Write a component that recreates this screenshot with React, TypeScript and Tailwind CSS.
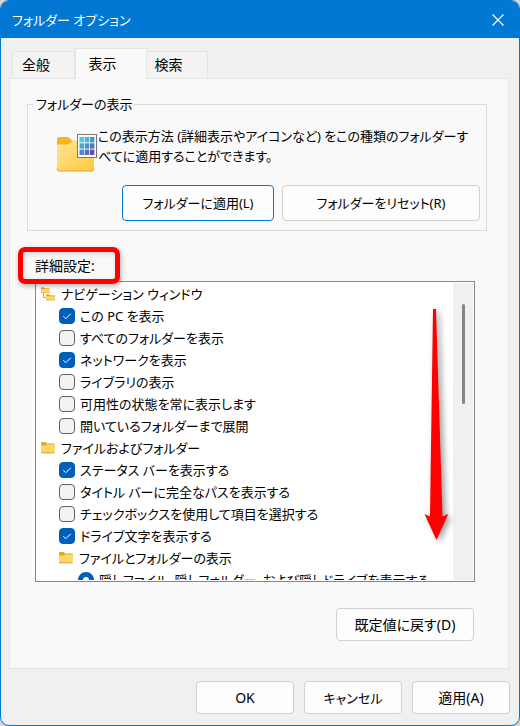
import * as React from 'react'
import { useState } from 'react'

interface TreeRow {
  id: string;
  label: string;
  level: number;
  kind: 'tree' | 'folder' | 'check' | 'radio';
  checked?: boolean;
}

const rows: TreeRow[] = [
  { id: 'nav', label: 'ナビゲーション ウィンドウ', level: 0, kind: 'tree' },
  { id: 'pc', label: 'この PC を表示', level: 1, kind: 'check', checked: true },
  { id: 'all', label: 'すべてのフォルダーを表示', level: 1, kind: 'check' },
  { id: 'net', label: 'ネットワークを表示', level: 1, kind: 'check', checked: true },
  { id: 'lib', label: 'ライブラリの表示', level: 1, kind: 'check' },
  { id: 'avail', label: '可用性の状態を常に表示します', level: 1, kind: 'check' },
  { id: 'expand', label: '開いているフォルダーまで展開', level: 1, kind: 'check' },
  { id: 'files', label: 'ファイルおよびフォルダー', level: 0, kind: 'folder' },
  { id: 'status', label: 'ステータス バーを表示する', level: 1, kind: 'check', checked: true },
  { id: 'path', label: 'タイトル バーに完全なパスを表示する', level: 1, kind: 'check' },
  { id: 'boxes', label: 'チェックボックスを使用して項目を選択する', level: 1, kind: 'check' },
  { id: 'drive', label: 'ドライブ文字を表示する', level: 1, kind: 'check', checked: true },
  { id: 'hidden', label: 'ファイルとフォルダーの表示', level: 1, kind: 'folder' },
  { id: 'show', label: '隠しファイル、隠しフォルダー、および隠しドライブを表示する', level: 2, kind: 'radio', checked: true },
];

const indents = ['pl-1', 'pl-[22px]', 'pl-[41px]'];

function SmallFolder() {
  return (
    <svg width="16" height="16" viewBox="1 0 16 16" className="shrink-0">
      <path d="M1 2.700q0-.7.7-.7h3.900l1.600 1.600H14q.7 0 .7.7V8H1z" fill="#e9a820" />
      <path d="M1 5.600h4.800l1.500-1.200H14q.8 0 .8.8v7.200q0 .8-.8.8H1.800q-.8 0-.8-.8z" fill="#ffd766" />
      <path d="M1 12.300h13.800q0 1-.8 1H1.800q-.8 0-.8-1z" fill="#d9a540" />
    </svg>
  );
}

function TreeIcon() {
  return (
    <svg width="16" height="16" viewBox="1 0 16 16" className="shrink-0">
      <path d="M3.500 6v5.500H7" fill="none" stroke="#a8a8a8" />
      <path d="M1 1.400h3l1 1h4.700v4.600H1z" fill="#ffd766" />
      <path d="M1 1.400h3l1 1h4.700v.6H1z" fill="#e0a01c" />
      <path d="M1 6.700h8.700" stroke="#dca63c" strokeWidth=".6" />
      <path d="M6 8.600h3l1 1h5v4.600H6z" fill="#ffd766" />
      <path d="M6 8.600h3l1 1h5v.6H6z" fill="#e0a01c" />
      <path d="M6 14h9" stroke="#dca63c" strokeWidth=".6" />
    </svg>
  );
}

function FolderWithGrid() {
  const tiles = [
    ['#49cbe0', '#48b5d8', '#409bd0'],
    ['#4aa9d0', '#4b90c8', '#5278be'],
    ['#5187c4', '#5d6cb8', '#6b4ba8'],
  ];
  return (
    <svg width="42" height="40" viewBox="0 0 42 40" className="shrink-0">
      <defs>
        <linearGradient id="folder" x1="0" y1="0" x2="1" y2="1">
          <stop offset="0" stopColor="#ffe59b" />
          <stop offset="1" stopColor="#ffc938" />
        </linearGradient>
      </defs>
      <path d="M1 5q0-2 2-2h8.500q1 0 1.700.7l3 3H20v6H1z" fill="#fbb514" />
      <path d="M1 11.500q0-1 1-1h9.500q1 0 1.800-.7l2.400-2.200q.7-.6 1.600-.6H36q2 0 2 2v26q0 2-2 2H3q-2 0-2-2z" fill="url(#folder)" />
      <path d="M1 34.500q0 2.500 2 2.500h33q2 0 2-2.500" fill="none" stroke="#d8a338" />
      <rect x="21.500" y=".5" width="19" height="23" fill="#fff" stroke="#767676" />
      {tiles.map((line, y) =>
        line.map((color, x) => (
          <rect key={color} x={23.5 + x * 5.2} y={3 + y * 6.3} width="4.500" height="5.400" fill={color} />
        ))
      )}
    </svg>
  );
}

function OptionRow({ row }: { row: TreeRow }) {
  const [checked, setChecked] = useState(!!row.checked);

  if (row.kind === 'tree' || row.kind === 'folder') {
    return (
      <li className={`flex h-[22px] items-center gap-1 ${indents[row.level]}`}>
        {row.kind === 'tree' ? <TreeIcon /> : <SmallFolder />}
        <span>{row.label}</span>
      </li>
    );
  }

  return (
    <li className={indents[row.level]}>
      <label className="flex h-[22px] items-center gap-[5px]">
        <span className="grid size-4 shrink-0 place-items-center">
          {row.kind === 'check' ? (
            <input
              type="checkbox"
              checked={checked}
              onChange={() => setChecked(!checked)}
              className="col-start-1 row-start-1 size-4 appearance-none rounded-[4px] border border-[#5f5f5f] bg-[#f3f3f3] checked:border-[#005fb8] checked:bg-[#005fb8]"
            />
          ) : (
            <input
              type="radio"
              name="hidden-files"
              defaultChecked
              className="col-start-1 row-start-1 size-4 appearance-none rounded-full border-[5px] border-[#005fb8] bg-white"
            />
          )}
          {row.kind === 'check' && checked && (
            <svg viewBox="0 0 16 16" className="pointer-events-none col-start-1 row-start-1 size-4">
              <path d="M4.300 8.200l2.500 2.500 5-5" fill="none" stroke="#fff" />
            </svg>
          )}
        </span>
        <span>{row.label}</span>
      </label>
    </li>
  );
}

function DialogButton({ children, className }: { children: React.ReactNode; className: string }) {
  return (
    <button type="button" className={`rounded-[4px] border bg-[#fdfdfd] text-center ${className}`}>
      {children}
    </button>
  );
}

export default function App() {
  return (
    <div className="h-screen bg-[#d6d6d6] font-['Noto_Sans','Noto_Sans_CJK_JP',sans-serif] text-[13px] leading-5 whitespace-nowrap text-black [font-feature-settings:'palt']">
      <div className="flex h-full flex-col overflow-hidden rounded-[9px] border border-[#0078d4] bg-[#f0f0f0]">
        <header className="flex h-[37px] shrink-0 items-center justify-between bg-[#0078d4] pr-[15px] pl-[11px] text-white">
          <h1>フォルダー オプション</h1>
          <button type="button" aria-label="閉じる">
            <svg width="12" height="12" viewBox="0 0 12 12">
              <path d="M.5.5l11 11M11.500.5l-11 11" stroke="#fff" strokeWidth="1.100" />
            </svg>
          </button>
        </header>

        <main className="flex min-h-0 flex-1 flex-col pt-[10px] pr-[10px] pl-2">
          <div role="tablist" className="flex shrink-0 items-end pl-[3px] text-sm">
            <button type="button" role="tab" className="h-[27px] w-[63px] border border-b-0 border-[#e5e5e5] bg-[#f3f3f3] pr-[15px]">全般</button>
            <button type="button" role="tab" aria-selected="true" className="relative -mb-px h-[31px] w-[72px] border border-b-0 border-[#e5e5e5] bg-[#f9f9f9] pr-[17px]">表示</button>
            <button type="button" role="tab" className="h-[27px] w-[61px] border border-b-0 border-l-0 border-[#e5e5e5] bg-[#f3f3f3] pr-[17px]">検索</button>
          </div>

          <section role="tabpanel" className="flex min-h-0 flex-1 flex-col border border-[#e5e5e5] bg-[#f9f9f9] pt-[15px] pb-[27px]">
            <fieldset className="mr-[21px] ml-[17px] min-w-0 shrink-0 border border-[#dcdcdc] pr-[6px] pb-[9px]">
              <legend className="ml-[6px] px-[2px]">フォルダーの表示</legend>
              <div className="flex pt-3 pl-[28px]">
                <div className="pt-2"><FolderWithGrid /></div>
                <p>
                  この表示方法 (詳細表示やアイコンなど) をこの種類のフォルダーす
                  <br />
                  べてに適用することができます。
                </p>
              </div>
              <div className="flex gap-2 pt-[11px] pl-[94px]">
                <DialogButton className="h-9 w-[152px] border-[#0078d4]">フォルダーに適用(L)</DialogButton>
                <DialogButton className="h-9 flex-1 border-[#d0d0d0]">フォルダーをリセット(R)</DialogButton>
              </div>
            </fieldset>

            <div className="relative z-10 mt-[25px] ml-[25px] flex self-start text-sm">
              <h2 id="advanced">詳細設定:</h2>
              <div className="pointer-events-none absolute -top-[9px] -left-[17px] h-[37px] w-[102px] rounded-[7px] border-[5px] border-[#ff0000] shadow-[1px_2px_5px_rgba(0,0,0,0.3),inset_1px_2px_5px_rgba(0,0,0,0.15)]" />
            </div>

            <div className="relative mt-[5px] mr-[33px] ml-[25px] flex min-h-0 flex-1 border border-[#828790] bg-white p-px">
              <ul aria-labelledby="advanced" className="min-w-0 flex-1 overflow-hidden">
                {rows.map((row) => (
                  <OptionRow key={row.id} row={row} />
                ))}
              </ul>
              <div className="flex w-5 shrink-0 justify-center bg-[#f0f0f0] pt-[21px]">
                <div className="h-[100px] w-[3px] rounded-full bg-[#868686]" />
              </div>
              <svg width="40" height="244" viewBox="0 0 40 244" className="pointer-events-none absolute top-[22px] right-[16px] drop-shadow-[3px_2px_3px_rgba(0,0,0,0.4)]">
                <path d="M15 5h3l6.500 207.500 5.800-2.500-11.800 26L6.500 210l5.500 2.500z" fill="#ff0000" />
              </svg>
            </div>

            <div className="flex shrink-0 justify-end pt-[26px] pr-[34px] text-sm">
              <DialogButton className="h-[33px] w-[138px] border-[#d0d0d0]">既定値に戻す(D)</DialogButton>
            </div>
          </section>
        </main>

        <footer className="flex shrink-0 justify-end gap-[10px] px-[9px] pt-3 pb-[11px]">
          <DialogButton className="h-[33px] w-[98px] border-[#d0d0d0] text-sm">OK</DialogButton>
          <DialogButton className="h-[33px] w-[98px] border-[#d0d0d0]">キャンセル</DialogButton>
          <DialogButton className="h-[33px] w-[98px] border-[#d0d0d0] text-sm">適用(A)</DialogButton>
        </footer>
      </div>
    </div>
  );
}
